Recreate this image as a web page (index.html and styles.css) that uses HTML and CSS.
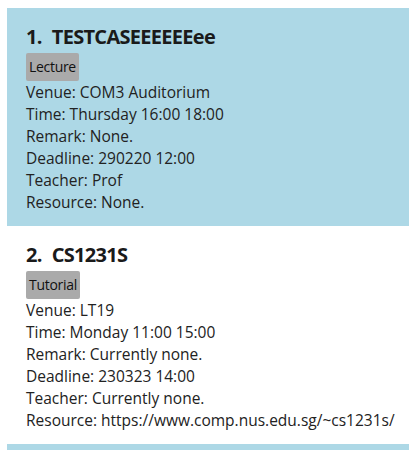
FILE: index.html
```html
<!DOCTYPE html>
<html>
<head>
<meta charset="utf-8">
<link rel="stylesheet" href="styles.css">
</head>
<body>
<div class="list">
  <div class="card odd">
    <div class="title"><span class="idx">1.</span><span>TESTCASEEEEEEee</span></div>
    <div class="tags"><span class="tag">Lecture</span></div>
    <div class="line">Venue: COM3 Auditorium</div>
    <div class="line">Time: Thursday 16:00 18:00</div>
    <div class="line">Remark: None.</div>
    <div class="line">Deadline: 290220 12:00</div>
    <div class="line">Teacher: Prof</div>
    <div class="line">Resource: None.</div>
  </div>
  <div class="card even">
    <div class="title"><span class="idx">2.</span><span>CS1231S</span></div>
    <div class="tags"><span class="tag">Tutorial</span></div>
    <div class="line">Venue: LT19</div>
    <div class="line">Time: Monday 11:00 15:00</div>
    <div class="line">Remark: Currently none.</div>
    <div class="line">Deadline: 230323 14:00</div>
    <div class="line">Teacher: Currently none.</div>
    <div class="line">Resource: https://www.comp.nus.edu.sg/~cs1231s/</div>
  </div>
  <div class="card odd"></div>
</div>
</body>
</html>
```
FILE: styles.css
```css
html, body {
  margin: 0;
  padding: 0;
  background: #ffffff;
  height: 450px;
  overflow: hidden;
}
body {
  padding: 8px 0 0 7px;
  box-sizing: border-box;
  font-family: "Open Sans", "Noto Sans", sans-serif;
  color: #222222;
}
.list {
  display: flex;
  flex-direction: column;
}
.card {
  height: 218px;
  flex: none;
  box-sizing: border-box;
  padding: 15px 10px 0 19px;
}
.odd { background: #add8e6; }
.even { background: #ffffff; }
.title {
  display: flex;
  gap: 10px;
  font-size: 20px;
  font-weight: 700;
  line-height: 27px;
  letter-spacing: -0.7px;
  color: #1a1a1a;
}
.tags {
  display: flex;
  margin-top: 3px;
  margin-bottom: 0;
}
.tag {
  background: #aaaaaa;
  border-radius: 2px;
  font-size: 14px;
  line-height: 28px;
  padding: 0 3px;
  letter-spacing: -0.3px;
  color: #111111;
}
.line {
  font-size: 15.5px;
  line-height: 22px;
  white-space: nowrap;
}
```
